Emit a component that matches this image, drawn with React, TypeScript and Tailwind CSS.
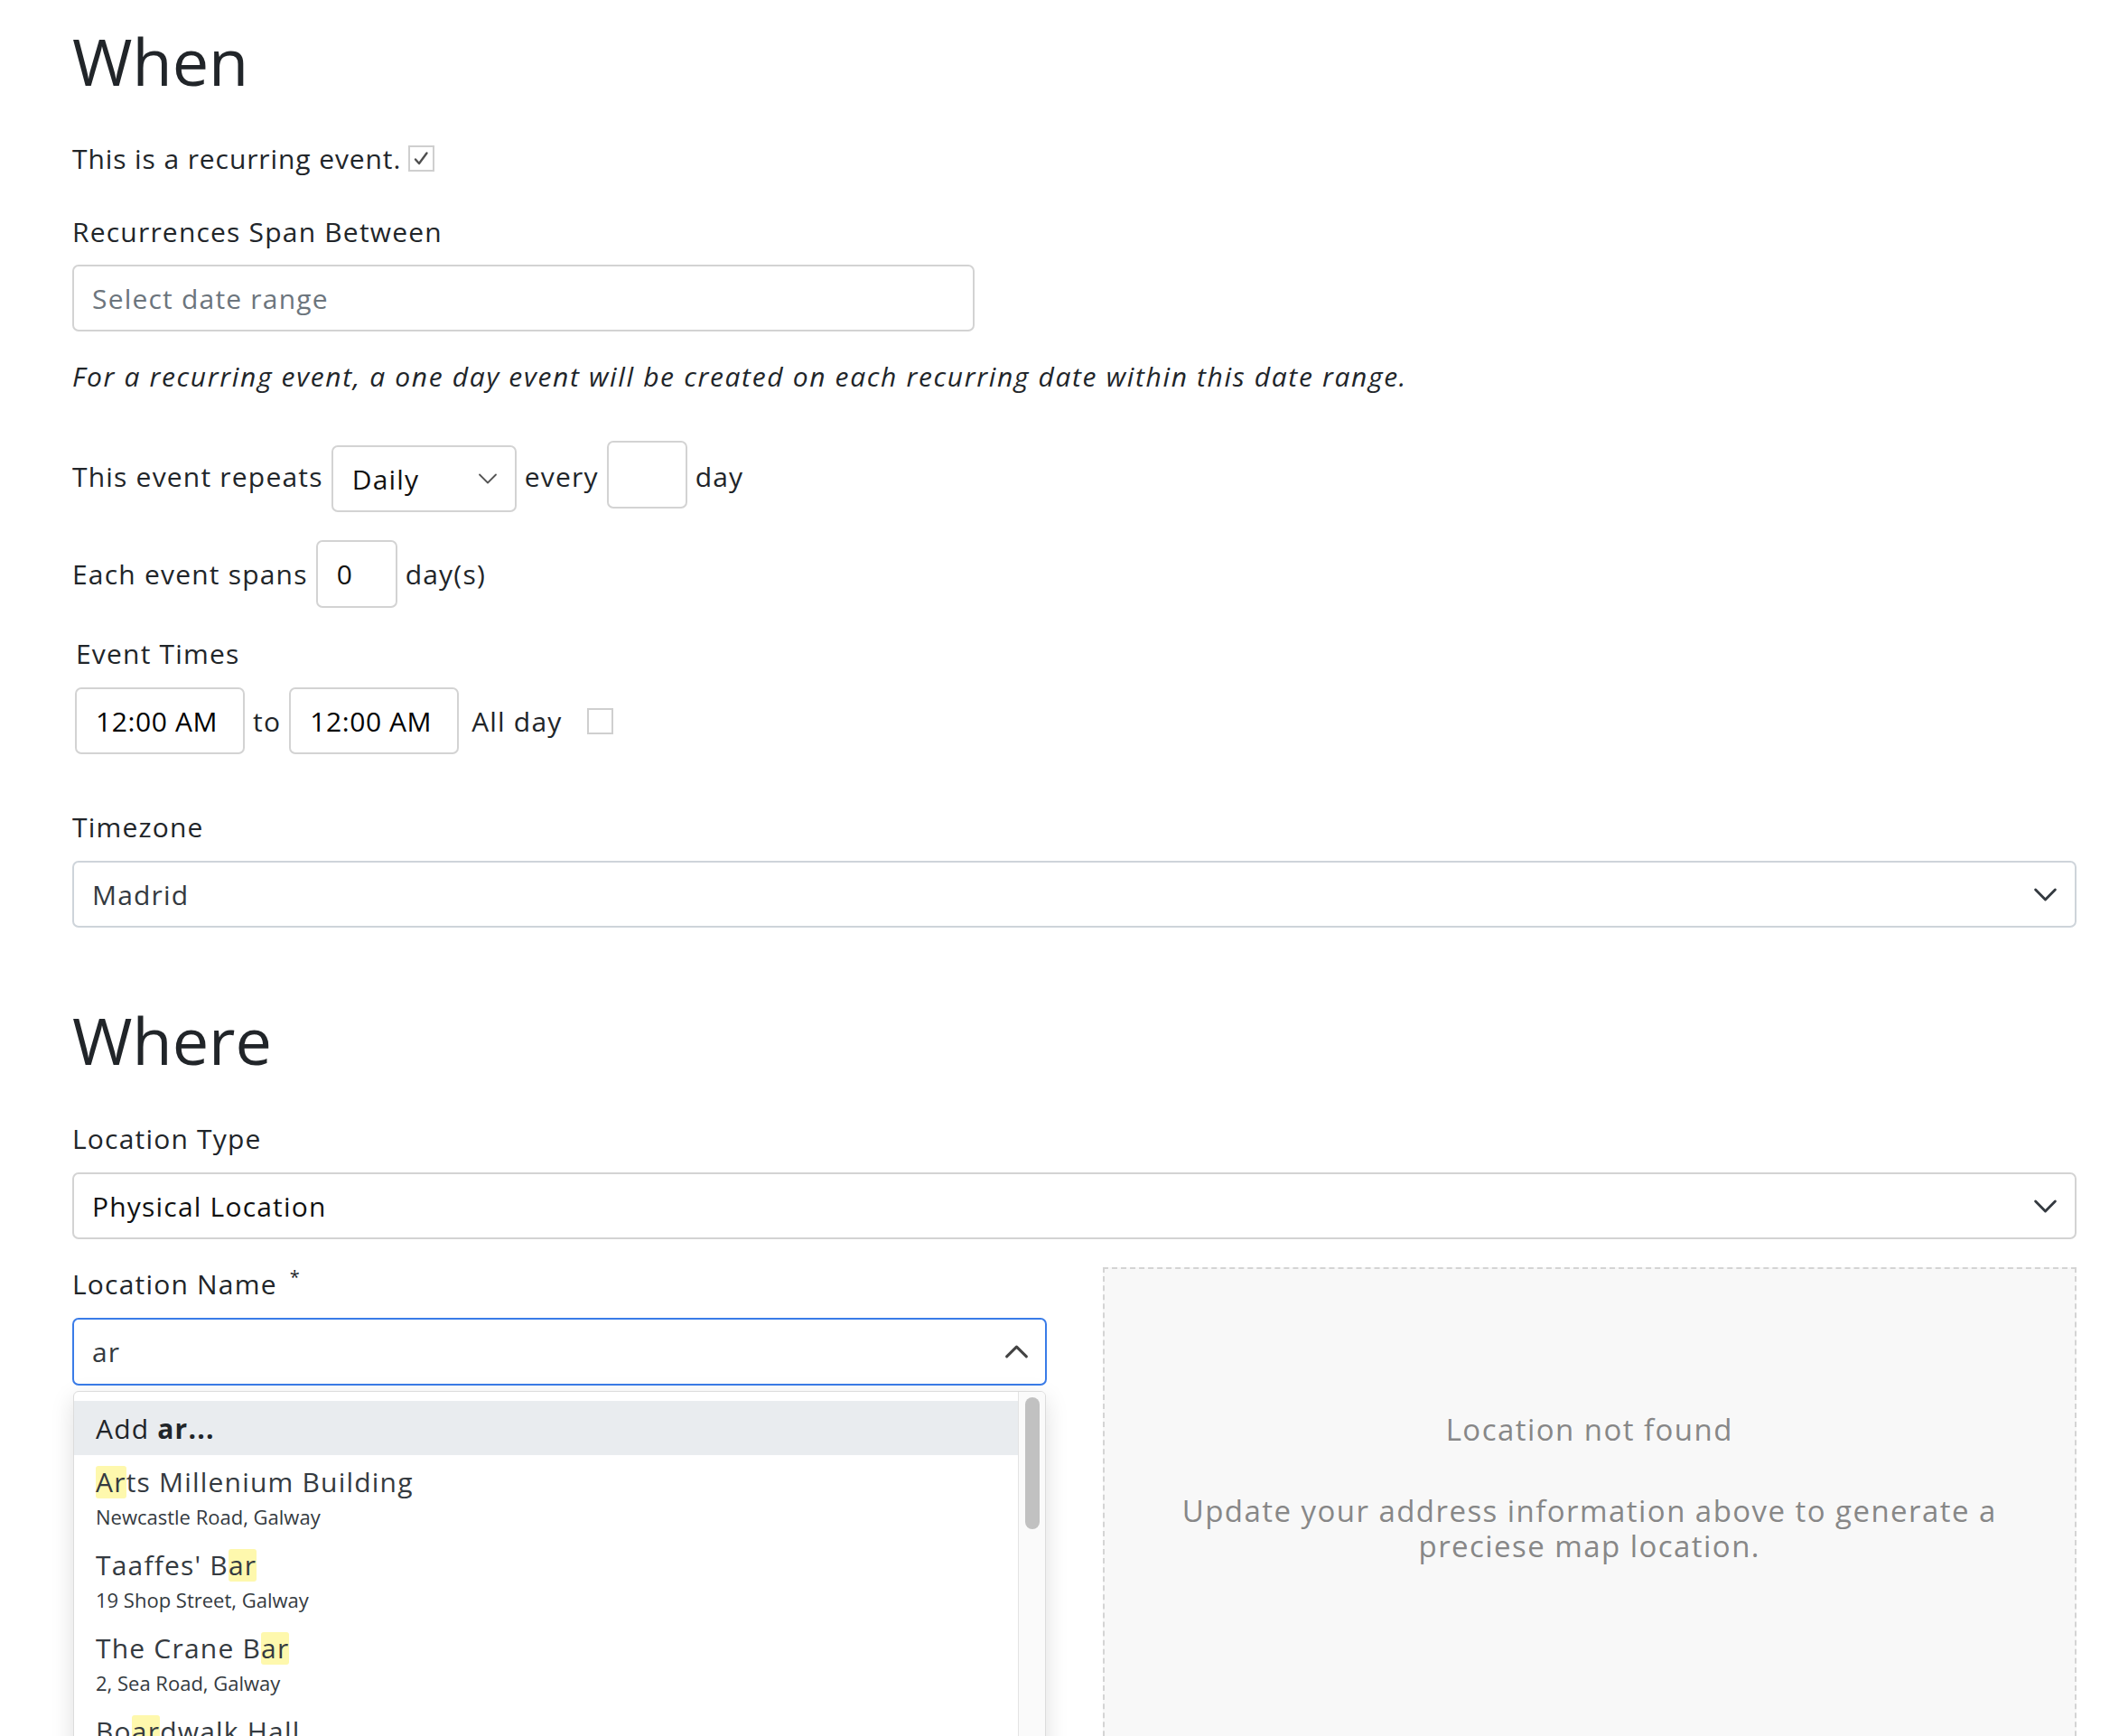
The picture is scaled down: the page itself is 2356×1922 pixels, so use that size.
import { FC, ReactNode } from 'react';

// ~ ~ ~ ~ ~ ~ ~ ~ ~ ~ ~ ~ ~ ~ ~ ~ ~ ~ ~ ~ ~ ~ Icons

const Chevron:FC<{ up?: boolean; className?: string; stroke?: number }> = ({ up, className, stroke = 1.6 }) => (
  <svg
    viewBox="0 0 16 16"
    fill="none"
    stroke="currentColor"
    strokeWidth={stroke}
    strokeLinecap="round"
    strokeLinejoin="round"
    className={className}
  >
    <path d={up ? 'm2 11 6-6 6 6' : 'm2 5 6 6 6-6'} />
  </svg>
);

const Checkbox:FC<{ checked?: boolean; className?: string }> = ({ checked, className = '' }) => (
  <span className={`flex h-[29px] w-[29px] shrink-0 items-center justify-center border-2 border-[#cfcfcf] bg-white ${className}`}>
    {checked && (
      <svg viewBox="0 0 25 25" className="h-[25px] w-[25px]" fill="none" stroke="#4f4f4f" strokeWidth={2.4} strokeLinecap="round" strokeLinejoin="round">
        <path d="M6 13.5l4 4.5 8.5-11.5" />
      </svg>
    )}
  </span>
);

// ~ ~ ~ ~ ~ ~ ~ ~ ~ ~ ~ ~ ~ ~ ~ ~ ~ ~ ~ ~ ~ ~ Fields

const SelectBox:FC<{ className?: string; children: ReactNode }> = ({ className = '', children }) => (
  <div className={`flex h-[74px] items-center justify-between rounded-[7px] border-2 bg-white pl-[20px] pr-[18px] ${className}`}>
    <span>{children}</span>
    <Chevron className="h-[29px] w-[29px] text-[#343a40]" />
  </div>
);

const Hl:FC<{ children: ReactNode }> = ({ children }) => (
  <span className="inline-block rounded-[3px] bg-[#fef8ad] leading-[36px]">{children}</span>
);

const places = [
  { pre: '', hit: 'Ar', post: 'ts Millenium Building', address: 'Newcastle Road, Galway' },
  { pre: "Taaffes' B", hit: 'ar', post: '', address: '19 Shop Street, Galway' },
  { pre: 'The Crane B', hit: 'ar', post: '', address: '2, Sea Road, Galway' },
  { pre: 'Bo', hit: 'ar', post: 'dwalk Hall', address: '' },
];

const LocationMenu:FC = () => (
  <div className="absolute left-[1px] right-[1px] top-full mt-[6px] flex h-[420px] overflow-hidden rounded-t-[6px] border border-[#dcdcdc] bg-white shadow-[0_8px_26px_rgba(0,0,0,0.13)]">
    <ul className="flex-1 pt-[10px]">
      <li className="flex h-[60px] items-center bg-[#e9ecef] px-[24px] text-[#212529]">
        Add&nbsp;<b className="font-bold">ar...</b>
      </li>
      {places.map(p => (
        <li key={p.pre + p.post} className="px-[24px] py-[7px] text-[#343a40]">
          <div className="text-[30px] leading-[45px]">
            {p.pre}<Hl>{p.hit}</Hl>{p.post}
          </div>
          {p.address && (
            <div className="text-[22px] leading-[33px] tracking-normal">{p.address}</div>
          )}
        </li>
      ))}
    </ul>
    <div className="w-[30px] border-l border-[#e3e3e3] bg-[#fafafa] pl-[7px] pt-[6px]">
      <div className="h-[146px] w-[16px] rounded-full bg-[#c1c1c1]" />
    </div>
  </div>
);

// ~ ~ ~ ~ ~ ~ ~ ~ ~ ~ ~ ~ ~ ~ ~ ~ ~ ~ ~ ~ ~ ~ Page

export const App:FC = () => {
  const field = 'rounded-[7px] border-2 border-[#d3d3d3] bg-white outline-none';

  return (
    <div className="h-[1922px] overflow-hidden bg-white pl-[80px] pr-[57px] pt-[24px] font-['Open_Sans',sans-serif] text-[30px] leading-[45px] tracking-[0.04em] text-[#212529]">

      <h2 className="text-[72px] font-normal leading-[86px] tracking-normal">When</h2>

      <div className="mt-[43px] flex items-center gap-[8px]">
        <span className="tracking-[0.03em]">This is a recurring event.</span>
        <Checkbox checked />
      </div>

      <div className="mt-[36px]">Recurrences Span Between</div>
      <input
        readOnly
        placeholder="Select date range"
        className={`mt-[14px] block h-[74px] w-[999px] px-[20px] placeholder:text-[#6c757d] ${field}`}
      />

      <p className="mt-[27px] italic tracking-[0.055em]">
        For a recurring event, a one day event will be created on each recurring date within this date range.
      </p>

      <div className="mt-[49px] flex items-start gap-[9px]">
        <span className="mt-[17px]">This event repeats</span>
        <div className={`mt-[5px] flex h-[74px] w-[205px] items-center justify-between pl-[21px] pr-[18px] text-[#111] ${field}`}>
          <span>Daily</span>
          <Chevron className="h-[24px] w-[24px] text-[#555]" stroke={1.2} />
        </div>
        <span className="mt-[17px]">every</span>
        <input readOnly className={`h-[75px] w-[89px] px-[20px] ${field}`} />
        <span className="mt-[17px]">day</span>
      </div>

      <div className="mt-[31px] flex items-center gap-[9px]">
        <span>Each event spans</span>
        <input readOnly value="0" className={`h-[75px] w-[90px] px-[21px] text-[#111] ${field}`} />
        <span>day(s)</span>
      </div>

      <div className="mt-[28px] pl-[4px]">Event Times</div>
      <div className="mt-[15px] flex items-center gap-[9px] pl-[3px]">
        <input readOnly value="12:00 AM" className={`h-[74px] w-[188px] px-[21px] tracking-[0.02em] text-black ${field}`} />
        <span>to</span>
        <input readOnly value="12:00 AM" className={`h-[74px] w-[188px] px-[21px] tracking-[0.02em] text-black ${field}`} />
        <span className="ml-[5px]">All day</span>
        <Checkbox className="ml-[18px]" />
      </div>

      <div className="mt-[58px]">Timezone</div>
      <SelectBox className="mt-[15px] border-[#ced4da] text-[#343a40]">Madrid</SelectBox>

      <h2 className="mt-[81px] text-[72px] font-normal leading-[86px] tracking-normal">Where</h2>

      <div className="mt-[44px]">Location Type</div>
      <SelectBox className="mt-[15px] border-[#d3d3d3] text-[#111]">Physical Location</SelectBox>

      <div className="mt-[27px] grid grid-cols-2 items-start gap-x-[62px]">
        <div>
          <div>
            Location Name<span className="ml-[14px] align-top text-[20px] leading-[30px]">*</span>
          </div>
          <div className="relative mt-[15px]">
            <div className="flex h-[75px] items-center justify-between rounded-[7px] border-2 border-[#3a7ce8] bg-white pl-[20px] pr-[17px] text-[#343a40]">
              <span>ar</span>
              <Chevron up className="h-[29px] w-[29px] text-[#444]" stroke={1.7} />
            </div>
            <LocationMenu />
          </div>
        </div>

        <div className="mt-[4px] h-[620px] border-2 border-dashed border-[#d4d4d4] bg-[#f8f8f8] pt-[158px] text-center text-[33px] leading-[39px] tracking-[0.044em] text-[#878787]">
          <p>Location not found</p>
          <p className="mt-[51px]">
            Update your address information above to generate a<br />
            preciese map location.
          </p>
        </div>
      </div>

    </div>
  );
};

// ~ ~ ~ ~ ~ ~ ~ ~ ~ ~ ~ ~ ~ ~ ~ ~ ~ ~ ~ ~ ~ ~ Export

export default App;
